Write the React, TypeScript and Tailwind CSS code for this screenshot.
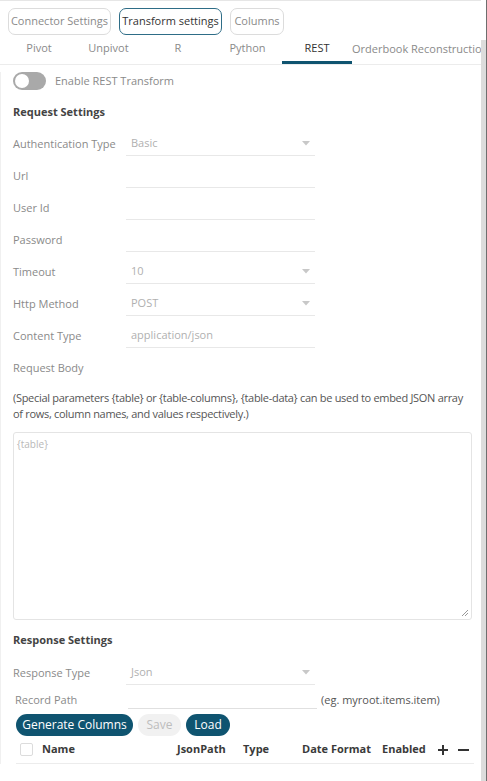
import React from "react";

const font = { fontFamily: '"Open Sans", "Noto Sans", sans-serif' };

const bodyHint =
  "(Special parameters {table} or {table-columns}, {table-data} can be used to embed JSON array of rows, column names, and values respectively.)";

function Caret() {
  return (
    <svg width="8" height="5" viewBox="0 0 8 5" className="ml-auto mr-[5px]">
      <path d="M0 0 L8 0 L4 4.5 Z" fill="#c8c8c8" />
    </svg>
  );
}

interface FieldRowProps {
  label: string;
  value?: string;
  dropdown?: boolean;
  noField?: boolean;
}

function FieldRow({ label, value, dropdown, noField }: FieldRowProps) {
  return (
    <div className="flex h-[32px] items-center">
      <div className="w-[113px] whitespace-nowrap text-[11px] text-[#8a8a8a]">{label}</div>
      {!noField && (
        <div className="flex h-[24px] w-[189px] items-center border-b border-[#e8e8e8] pl-[5px] text-[11px] text-[#b0b0b0]">
          <span>{value}</span>
          {dropdown && <Caret />}
        </div>
      )}
    </div>
  );
}

const tabs = [
  { name: "Pivot", w: "w-[70px]" },
  { name: "Unpivot", w: "w-[69px]" },
  { name: "R", w: "w-[70px]" },
  { name: "Python", w: "w-[69px]" },
  { name: "REST", w: "w-[70px]", active: true },
];

export default function App() {
  return (
    <div className="flex h-[781px] w-[487px] overflow-hidden bg-white" style={font}>
      <div className="w-[481px] shrink-0 overflow-hidden border-t border-[#e6e6e6]">
        <div className="flex gap-[8px] pl-[8px] pt-[7px]">
          <div className="flex h-[27px] w-[103px] items-center justify-center whitespace-nowrap rounded-[7px] border border-[#dcdcdc] text-[11px] text-[#8a8a8a]">
            Connector Settings
          </div>
          <div className="flex h-[27px] w-[103px] items-center justify-center whitespace-nowrap rounded-[7px] border border-[#2e6d87] text-[11px] text-[#333]">
            Transform settings
          </div>
          <div className="flex h-[27px] w-[54px] items-center justify-center whitespace-nowrap rounded-[7px] border border-[#dcdcdc] text-[11px] text-[#8a8a8a]">
            Columns
          </div>
        </div>

        <div className="flex h-[30px] border-b border-[#ececec] pl-[4px]">
          {tabs.map((t) => (
            <div
              key={t.name}
              className={`${t.w} flex shrink-0 items-center justify-center border-b-[3px] text-[11px] ${
                t.active ? "border-[#0f5470] text-[#333]" : "border-transparent text-[#8a8a8a]"
              }`}
            >
              {t.name}
            </div>
          ))}
          <div className="flex items-center whitespace-nowrap text-[11px] text-[#8a8a8a]">
            Orderbook Reconstruction
          </div>
        </div>

        <div className="border-l border-[#f0f0f0] pl-[12px] pr-[9px]">
          <div className="mt-[7px] flex h-[18px] items-center gap-[9px]">
            <div className="flex h-[18px] w-[33px] items-center rounded-full bg-[#a9a9a9] pl-[2px]">
              <div className="h-[14px] w-[14px] rounded-full bg-white" />
            </div>
            <span className="text-[11px] text-[#8a8a8a]">Enable REST Transform</span>
          </div>

          <div className="mt-[14px] text-[11px] font-bold leading-[16px] text-[#444]">Request Settings</div>

          <div className="mt-[8px]">
            <FieldRow label="Authentication Type" value="Basic" dropdown />
            <FieldRow label="Url" />
            <FieldRow label="User Id" />
            <FieldRow label="Password" />
            <FieldRow label="Timeout" value="10" dropdown />
            <FieldRow label="Http Method" value="POST" dropdown />
            <FieldRow label="Content Type" value="application/json" />
            <FieldRow label="Request Body" noField />
          </div>

          <p className="mt-[6px] w-[462px] text-[11px] leading-[16px] tracking-[-0.3px] text-[#555]">{bodyHint}</p>

          <div className="relative mt-[10px] h-[188px] w-[459px] rounded-[3px] border border-[#e4e4e4] px-[3px] pt-[4px] text-[10px] text-[#b8b8b8]">
            {"{table}"}
            <svg width="8" height="8" viewBox="0 0 8 8" className="absolute bottom-[2px] right-[2px]">
              <path d="M7 1 L1 7 M7 4 L4 7" stroke="#999" strokeWidth="1" />
            </svg>
          </div>

          <div className="mt-[12px] text-[11px] font-bold leading-[16px] text-[#444]">Response Settings</div>

          <div className="mt-[9px]">
            <FieldRow label="Response Type" value="Json" dropdown />
          </div>

          <div className="flex h-[22px] items-center pl-[2px]">
            <div className="w-[113px] text-[11px] text-[#8a8a8a]">Record Path</div>
            <div className="h-[18px] w-[189px] border-b border-[#e0e0e0]" />
            <span className="ml-[4px] text-[11px] text-[#555]">(eg. myroot.items.item)</span>
          </div>

          <div className="mt-[3px] flex gap-[5px] pl-[3px]">
            <div className="flex h-[22px] w-[117px] items-center justify-center whitespace-nowrap rounded-full bg-[#0f5470] text-[12px] text-white">
              Generate Columns
            </div>
            <div className="flex h-[22px] w-[43px] items-center justify-center rounded-full bg-[#f1f1f1] text-[12px] text-[#bdbdbd]">
              Save
            </div>
            <div className="flex h-[22px] w-[44px] items-center justify-center rounded-full bg-[#0f5470] text-[12px] text-white">
              Load
            </div>
          </div>

          <div className="ml-[3px] flex h-[28px] w-[458px] items-center border-b border-[#ececec] text-[11px] font-bold text-[#3a3a3a]">
            <div className="ml-[4px] h-[13px] w-[13px] rounded-[2px] border border-[#dcdcdc]" />
            <span className="ml-[9px] w-[135px]">Name</span>
            <span className="w-[66px]">JsonPath</span>
            <span className="w-[59px]">Type</span>
            <span className="w-[80px]">Date Format</span>
            <span className="w-[56px]">Enabled</span>
            <svg width="10" height="10" viewBox="0 0 10 10">
              <path d="M5 0 V10 M0 5 H10" stroke="#333" strokeWidth="2" />
            </svg>
            <svg width="11" height="10" viewBox="0 0 11 10" className="ml-[10px]">
              <path d="M0 5 H11" stroke="#333" strokeWidth="2" />
            </svg>
          </div>
        </div>
      </div>
      <div className="flex w-[6px] shrink-0 flex-col border-r border-[#6e6e6e]">
        <div className="h-[40px] bg-white" />
        <div className="flex-1 bg-[#dcdcdc]" />
      </div>
    </div>
  );
}
